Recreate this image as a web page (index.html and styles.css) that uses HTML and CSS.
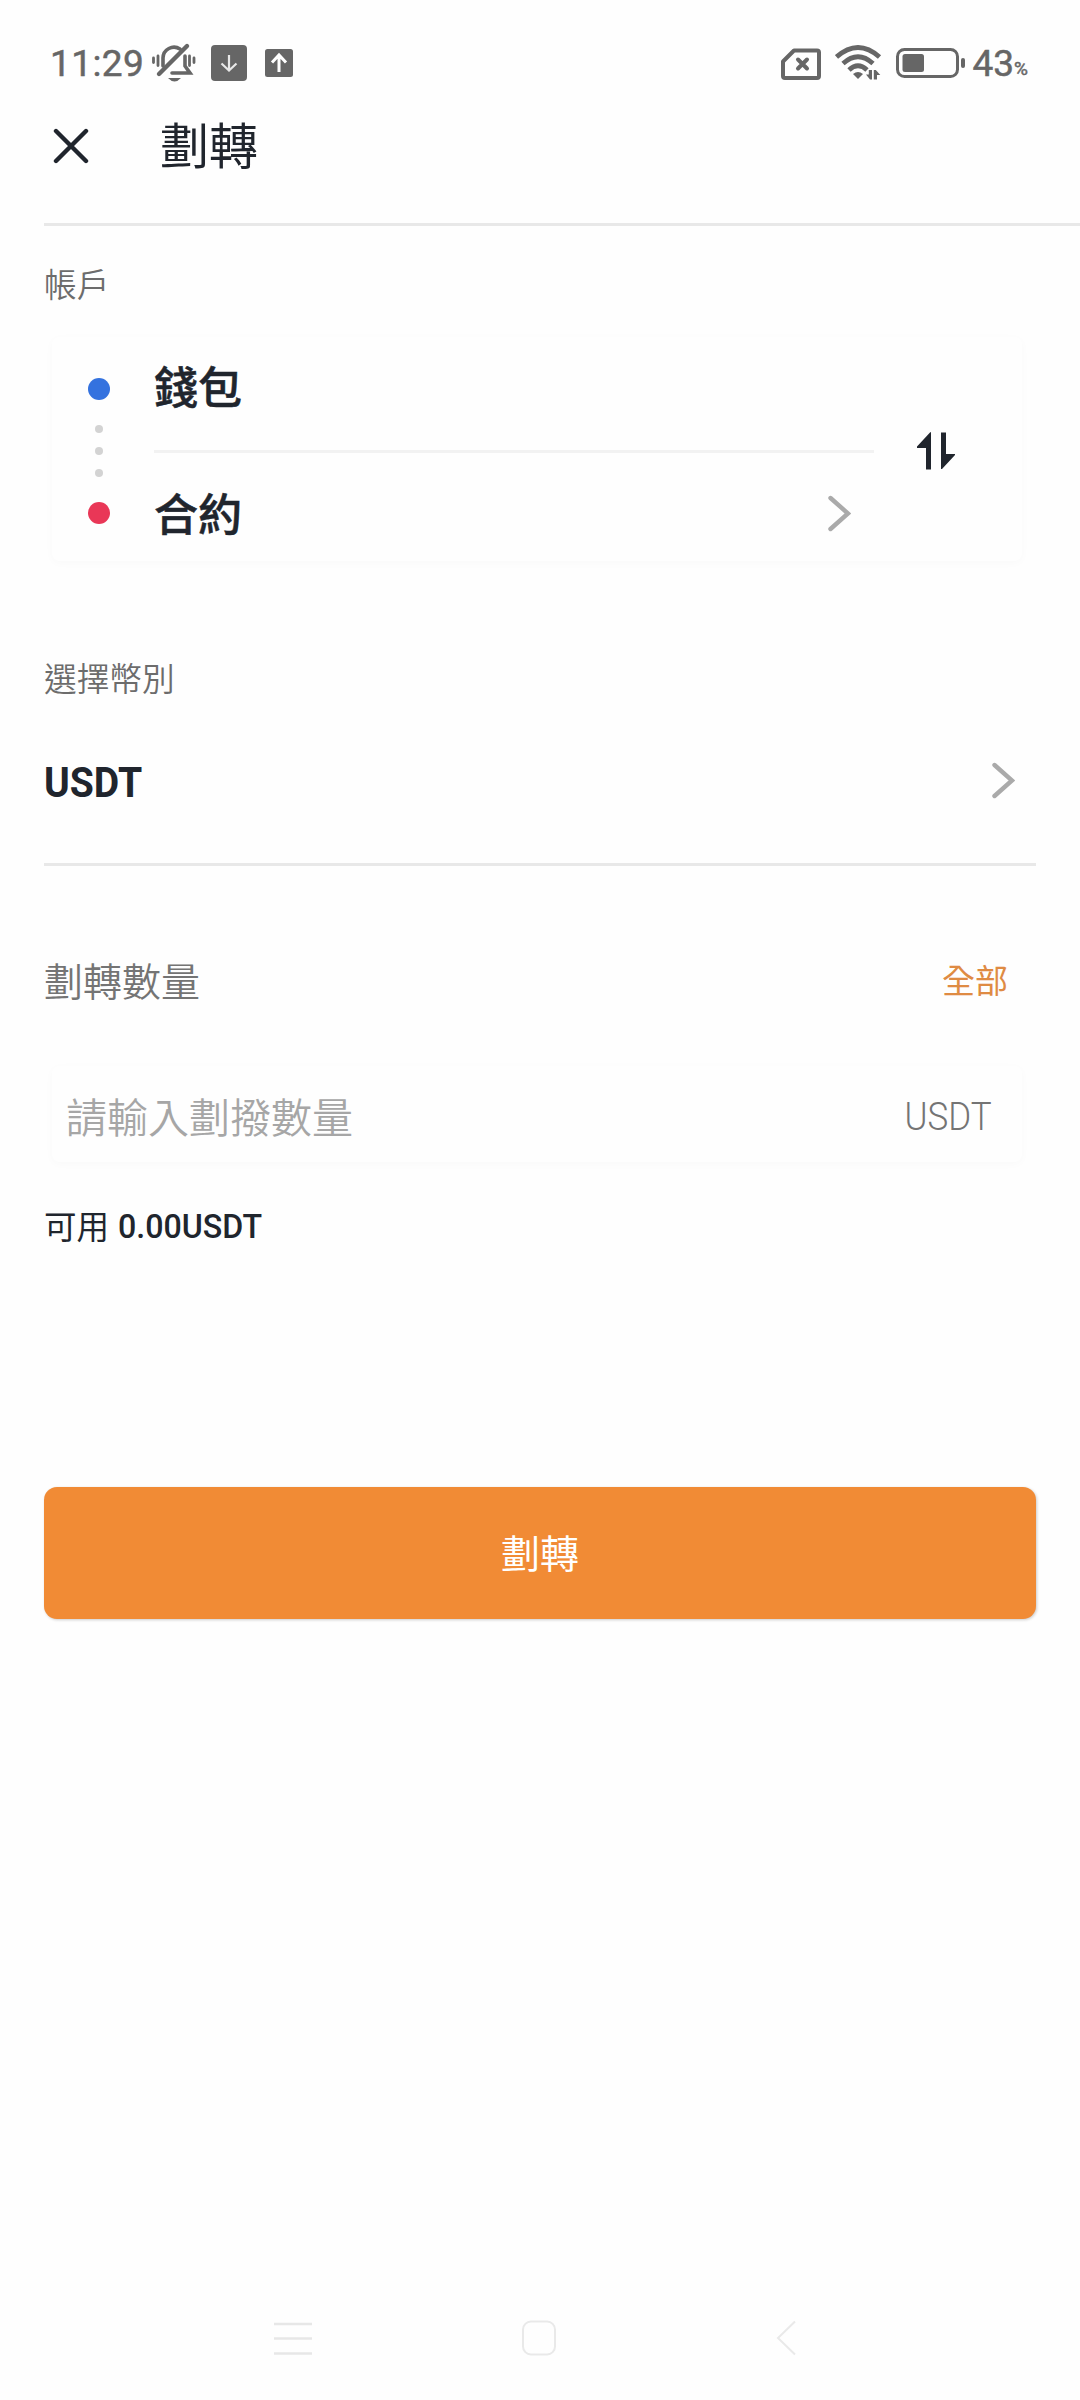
FILE: index.html
```html
<!DOCTYPE html>
<html lang="zh-Hant">
<head>
<meta charset="utf-8">
<title>劃轉</title>
<link rel="stylesheet" href="styles.css">
</head>
<body>
<div class="screen">
  <div class="status">
    <span class="clock">11:29</span>
    <svg class="bell" width="46" height="42" viewBox="0 0 46 42" fill="none" stroke="#666" stroke-width="3.4" stroke-linecap="round">
      <path d="M12 24V16a11 11 0 0 1 17-9M34 14v10l5 7H21" stroke-width="3.600"/>
      <path d="M8 32L36 4" stroke-width="4.400"/>
      <path d="M2.500 16v4.500M7 14v9.500M38.500 14v9.500M43 16v4.500" stroke-width="2.800"/>
      <path d="M17 36h13q-6.500 7-13 0z" fill="#666" stroke="none"/>
    </svg>
    <svg class="down" width="36" height="36" viewBox="0 0 36 36" fill="none">
      <rect width="36" height="36" rx="4" fill="#666"/>
      <path d="M18 10v15M10.500 18.500l7.500 7 7.500-7" stroke="#e8e8e8" stroke-width="2.200"/>
    </svg>
    <svg class="up" width="28" height="28" viewBox="0 0 28 28" fill="none">
      <rect width="28" height="28" rx="2.500" fill="#666"/>
      <path d="M14 23V7M7 13.500l7-7.500 7 7.500" stroke="#fff" stroke-width="3"/>
    </svg>
    <svg class="sim" width="40" height="32" viewBox="0 0 40 32" fill="none" stroke="#666" stroke-width="4" stroke-linejoin="round" stroke-linecap="round">
      <path d="M13 2.500H36q2 0 2 2V28q0 2-2 2H4q-2 0-2-2V13.500z"/>
      <path d="M17 11.500l9 9M26 11.500L17 20.500"/>
    </svg>
    <svg class="wifi" width="48" height="36" viewBox="0 0 48 36" fill="none" stroke="#666" stroke-width="4.800">
      <path d="M1.500 12Q23 -7 44.500 12"/>
      <path d="M8 18.500Q23 5 38 18.500"/>
      <path d="M14 25Q23 16.500 32 25"/>
      <path d="M18 29q5-4 10 0l-5 5z" fill="#666" stroke="none"/>
      <path d="M37 25v9.500h-2l-4-5h2.800V25zM38.800 34.500V25h2l4.500 5H42v4.500z" fill="#666" stroke="none"/>
    </svg>
    <svg class="battery" width="70" height="30" viewBox="0 0 70 30" fill="none">
      <rect x="1.500" y="1.500" width="60" height="27" rx="7" stroke="#666" stroke-width="3"/>
      <rect x="6.500" y="6" width="21.500" height="18" rx="2.500" fill="#666"/>
      <rect x="65" y="10" width="4" height="10" rx="2" fill="#666"/>
    </svg>
    <span class="level">43</span><span class="percent">%</span>
  </div>

  <header class="titlebar">
    <svg width="36" height="36" viewBox="0 0 36 36" fill="none" stroke="#20252d" stroke-width="4.400" stroke-linecap="round"><path d="M3 3l30 30M33 3L3 33"/></svg>
    <h1 class="title">劃轉</h1>
  </header>

  <main class="content">
    <div class="label">帳戶</div>
    <section class="accounts">
      <div class="track">
        <i class="dot from"></i><i class="dot small"></i><i class="dot small"></i><i class="dot small"></i><i class="dot to"></i>
      </div>
      <div class="routes">
        <div class="route">錢包</div>
        <div class="route second"><span class="route-name">合約</span>
          <svg width="23" height="37" viewBox="0 0 23 37" fill="none" stroke="#aaa" stroke-width="4.400" stroke-linecap="round"><path d="M2.500 3l17.500 15.500L2.500 34"/></svg>
        </div>
      </div>
      <svg class="swap" width="38" height="38" viewBox="0 0 38 38" fill="#20252d"><path d="M14 0v37.500H9V16H0v-1.500L13 .5zM24 .5h5V22h9v1L25 37h-1z"/></svg>
    </section>

    <div class="label coin-label">選擇幣別</div>
    <div class="coin">
      <span class="coin-name">USDT</span>
      <svg width="23" height="37" viewBox="0 0 23 37" fill="none" stroke="#aaa" stroke-width="4.400" stroke-linecap="round"><path d="M2.500 3l17.500 15.500L2.500 34"/></svg>
    </div>

    <div class="amount-head"><span>劃轉數量</span><span class="all">全部</span></div>
    <div class="amount"><span class="placeholder">請輸入劃撥數量</span><span class="unit">USDT</span></div>
    <div class="available"><span class="available-label">可用</span><span class="balance">0.00USDT</span></div>
    <button class="submit">劃轉</button>
  </main>

  <nav class="navbar">
    <svg width="38" height="36" viewBox="0 0 38 36" stroke="#e7e7e7" stroke-width="2.400"><path d="M0 4h38M0 18.500h38M0 33.500h38"/></svg>
    <svg width="36" height="36" viewBox="0 0 36 36" fill="none" stroke="#e9e9e9" stroke-width="2"><rect x="2" y="1.500" width="32" height="33" rx="8"/></svg>
    <svg width="20" height="36" viewBox="0 0 20 36" fill="none" stroke="#e9e9e9" stroke-width="2"><path d="M19 1.500L2 18l17 16.500"/></svg>
  </nav>
</div>
</body>
</html>
```

FILE: styles.css
```css
* { box-sizing: border-box; }
body {
  margin: 0;
  background: #fefefe;
  color: #20252d;
  font-family: Roboto, "Noto Sans CJK TC", sans-serif;
}
svg { display: block; flex: none; }
.screen {
  width: 1080px;
  height: 2400px;
  display: flex;
  flex-direction: column;
}
.status {
  height: 98px;
  padding: 28px 50px 0 50px;
  display: flex;
  align-items: center;
  color: #666;
}
.clock { width: 101px; font-size: 37px; line-height: 44px; letter-spacing: 0.4px; white-space: nowrap; padding-top: 2px; -webkit-text-stroke: 0.5px #666; }
.down { margin-left: 14px; }
.up { margin-left: 18px; }
.sim { margin-left: auto; margin-top: 2px; }
.wifi { margin-left: 14px; }
.battery { margin-left: 13px; }
.level { margin-left: 6px; font-size: 37px; line-height: 44px; padding-top: 2px; -webkit-text-stroke: 0.5px #666; }
.percent { font-size: 19px; line-height: 22px; margin-top: 12px; width: 16px; -webkit-text-stroke: 0.5px #666; }

.titlebar {
  height: 128px;
  margin-left: 44px;
  padding: 0 0 30px 9px;
  display: flex;
  align-items: center;
  gap: 71px;
  border-bottom: 3px solid #e8e8e8;
}
.title { margin: 0; padding-top: 4px; font-size: 49px; line-height: 60px; font-weight: 400; }

.content { padding: 0 44px; display: flex; flex-direction: column; }
.label { margin-top: 36px; height: 48px; line-height: 48px; font-size: 32.700px; font-weight: 350; color: #6c6c6c; }

.accounts {
  margin: 27px 14px 0 8px;
  height: 224px;
  display: flex;
  align-items: center;
  border-radius: 8px;
  box-shadow: 0 2px 10px rgba(0, 0, 0, 0.025);
}
.track {
  width: 98px;
  padding-right: 4px;
  display: flex;
  flex-direction: column;
  align-items: center;
  gap: 14px;
  margin-top: 4px;
}
.dot { width: 22px; height: 22px; border-radius: 50%; }
.small { width: 8px; height: 8px; background: #d3d3d3; }
.small:nth-child(2) { margin-top: 11px; }
.small:nth-child(4) { margin-bottom: 11px; }
.from { background: #3472df; }
.to { background: #e93757; }
.routes { width: 720px; margin-left: 4px; height: 224px; }
.route {
  height: 116px;
  padding: 0 0 17px 0;
  display: flex;
  align-items: center;
  justify-content: space-between;
  font-size: 44px;
  font-weight: 500;
  -webkit-text-stroke: 0.5px #20252d;
  border-bottom: 3px solid #f2f2f2;
}
.second { height: 108px; padding: 13px 23px 0 0; border: 0; }
.route-name { padding-bottom: 4px; }
.swap { margin-left: 43px; margin-top: 4px; }

.coin-label { margin-top: 95px; }
.coin {
  height: 162px;
  padding: 0 21px 6px 0;
  display: flex;
  align-items: center;
  justify-content: space-between;
  border-bottom: 3px solid #e8e8e8;
}
.coin-name { padding-top: 3px; font-size: 42.500px; font-weight: 700; transform: scaleX(0.92); transform-origin: left; }

.amount-head {
  margin-top: 83px;
  height: 60px;
  padding-right: 28px;
  display: flex;
  align-items: center;
  justify-content: space-between;
  font-size: 39px;
  font-weight: 350;
  color: #747474;
}
.all { font-size: 33px; font-weight: 400; color: #df8b43; }
.amount {
  margin: 57px 14px 0 8px;
  height: 96px;
  padding: 2px 30px 0 14px;
  display: flex;
  align-items: center;
  justify-content: space-between;
  border-radius: 8px;
  box-shadow: 0 2px 10px rgba(0, 0, 0, 0.025);
}
.placeholder { font-size: 41px; font-weight: 350; color: #a6a6a6; }
.unit { padding-top: 4px; font-size: 38px; font-weight: 350; color: #747474; transform: scaleX(0.92); transform-origin: right; }
.available {
  margin-top: 40px;
  height: 48px;
  display: flex;
  align-items: center;
  gap: 9px;
  font-size: 32.500px;
}
.available-label { padding-bottom: 4px; }
.balance { font-size: 33.500px; font-weight: 500; transform: scaleX(0.96); transform-origin: left; }
.submit {
  margin-top: 237px;
  height: 132px;
  padding: 3px 0 0;
  border: 0;
  border-radius: 13px;
  background: #f18b35;
  color: #fff;
  font: 400 39px/60px Roboto, "Noto Sans CJK TC", sans-serif;
  box-shadow: 1px 1px 3px rgba(0, 0, 0, 0.2);
}

.navbar {
  margin-top: auto;
  padding: 0 284px 44px 274px;
  display: grid;
  grid-template-columns: 247px 1fr 20px;
}
```
